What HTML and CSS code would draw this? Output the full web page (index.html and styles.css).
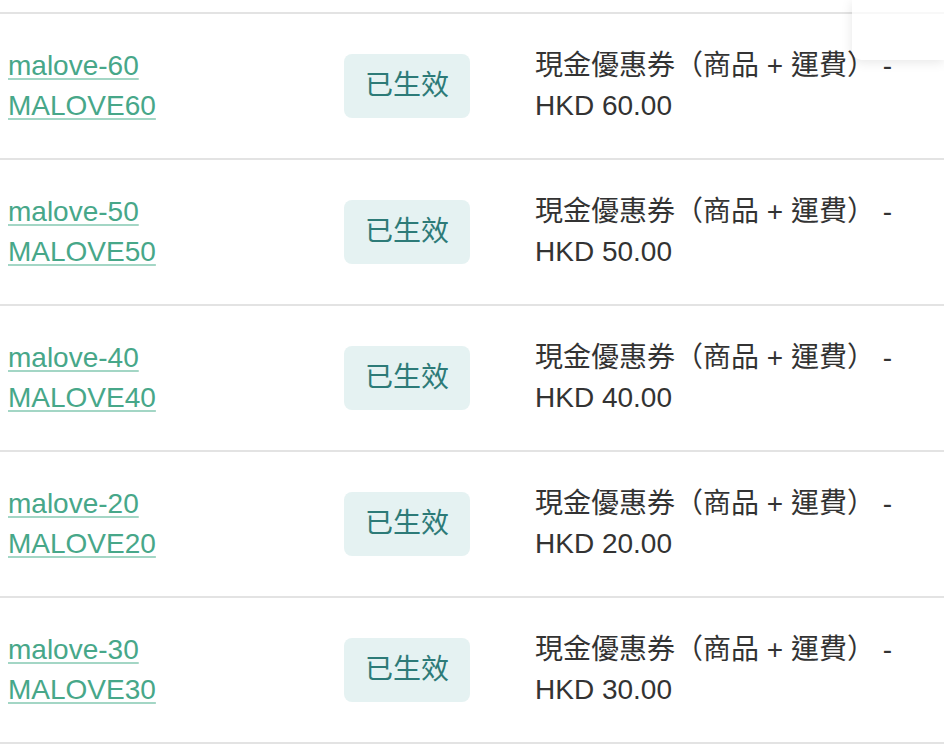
FILE: index.html
```html
<!DOCTYPE html>
<html lang="zh-Hant">
<head>
  <meta charset="UTF-8">
  <meta name="viewport" content="width=device-width, initial-scale=1.0">
  <title>優惠券</title>
  <link rel="stylesheet" href="styles.css">
</head>
<body>
  <div class="coupon-list">
    <div class="coupon-row">
      <div class="coupon-name">
        <a href="#">malove-60</a><br>
        <a href="#">MALOVE60</a>
      </div>
      <div class="coupon-status"><span class="badge">已生效</span></div>
      <div class="coupon-desc">現金優惠券（商品 + 運費） - HKD 60.00</div>
    </div>
    <div class="coupon-row">
      <div class="coupon-name">
        <a href="#">malove-50</a><br>
        <a href="#">MALOVE50</a>
      </div>
      <div class="coupon-status"><span class="badge">已生效</span></div>
      <div class="coupon-desc">現金優惠券（商品 + 運費） - HKD 50.00</div>
    </div>
    <div class="coupon-row">
      <div class="coupon-name">
        <a href="#">malove-40</a><br>
        <a href="#">MALOVE40</a>
      </div>
      <div class="coupon-status"><span class="badge">已生效</span></div>
      <div class="coupon-desc">現金優惠券（商品 + 運費） - HKD 40.00</div>
    </div>
    <div class="coupon-row">
      <div class="coupon-name">
        <a href="#">malove-20</a><br>
        <a href="#">MALOVE20</a>
      </div>
      <div class="coupon-status"><span class="badge">已生效</span></div>
      <div class="coupon-desc">現金優惠券（商品 + 運費） - HKD 20.00</div>
    </div>
    <div class="coupon-row">
      <div class="coupon-name">
        <a href="#">malove-30</a><br>
        <a href="#">MALOVE30</a>
      </div>
      <div class="coupon-status"><span class="badge">已生效</span></div>
      <div class="coupon-desc">現金優惠券（商品 + 運費） - HKD 30.00</div>
    </div>
  </div>

  <div class="corner-popup"></div>
</body>
</html>
```

FILE: styles.css
```css
/* Coupon list */

body {
  font-family: "Liberation Sans", Arial, "Noto Sans CJK TC", sans-serif;
  font-size: 28px;
  line-height: 40px;
  color: #333;
  background-color: #fff;
  margin: 0;
  padding: 0;
  overflow: hidden;
}

.coupon-list {
  margin-top: 12px;
  border-bottom: 2px solid #e3e3e3;
}

.coupon-row {
  display: grid;
  grid-template-columns: 336px 191px 380px;
  align-items: center;
  padding: 32px 0 32px 8px;
  border-top: 2px solid #e3e3e3;
}

.coupon-name a {
  color: #47a789;
  text-decoration: underline;
  text-decoration-color: #a3d6c5;
  text-decoration-thickness: 2px;
  text-underline-offset: 3px;
}

.badge {
  display: inline-block;
  padding: 12px 21px;
  background-color: #e5f2f2;
  color: #2d7b78;
  border-radius: 8px;
}

.coupon-desc {
  color: #333;
}

/* Popup peeking in at the top right */

.corner-popup {
  position: absolute;
  top: 0;
  right: 0;
  width: 92px;
  height: 60px;
  background-color: rgba(255, 255, 255, 0.75);
  border-bottom-left-radius: 10px;
  box-shadow: 0 2px 12px rgba(0, 0, 0, 0.1);
}
```
